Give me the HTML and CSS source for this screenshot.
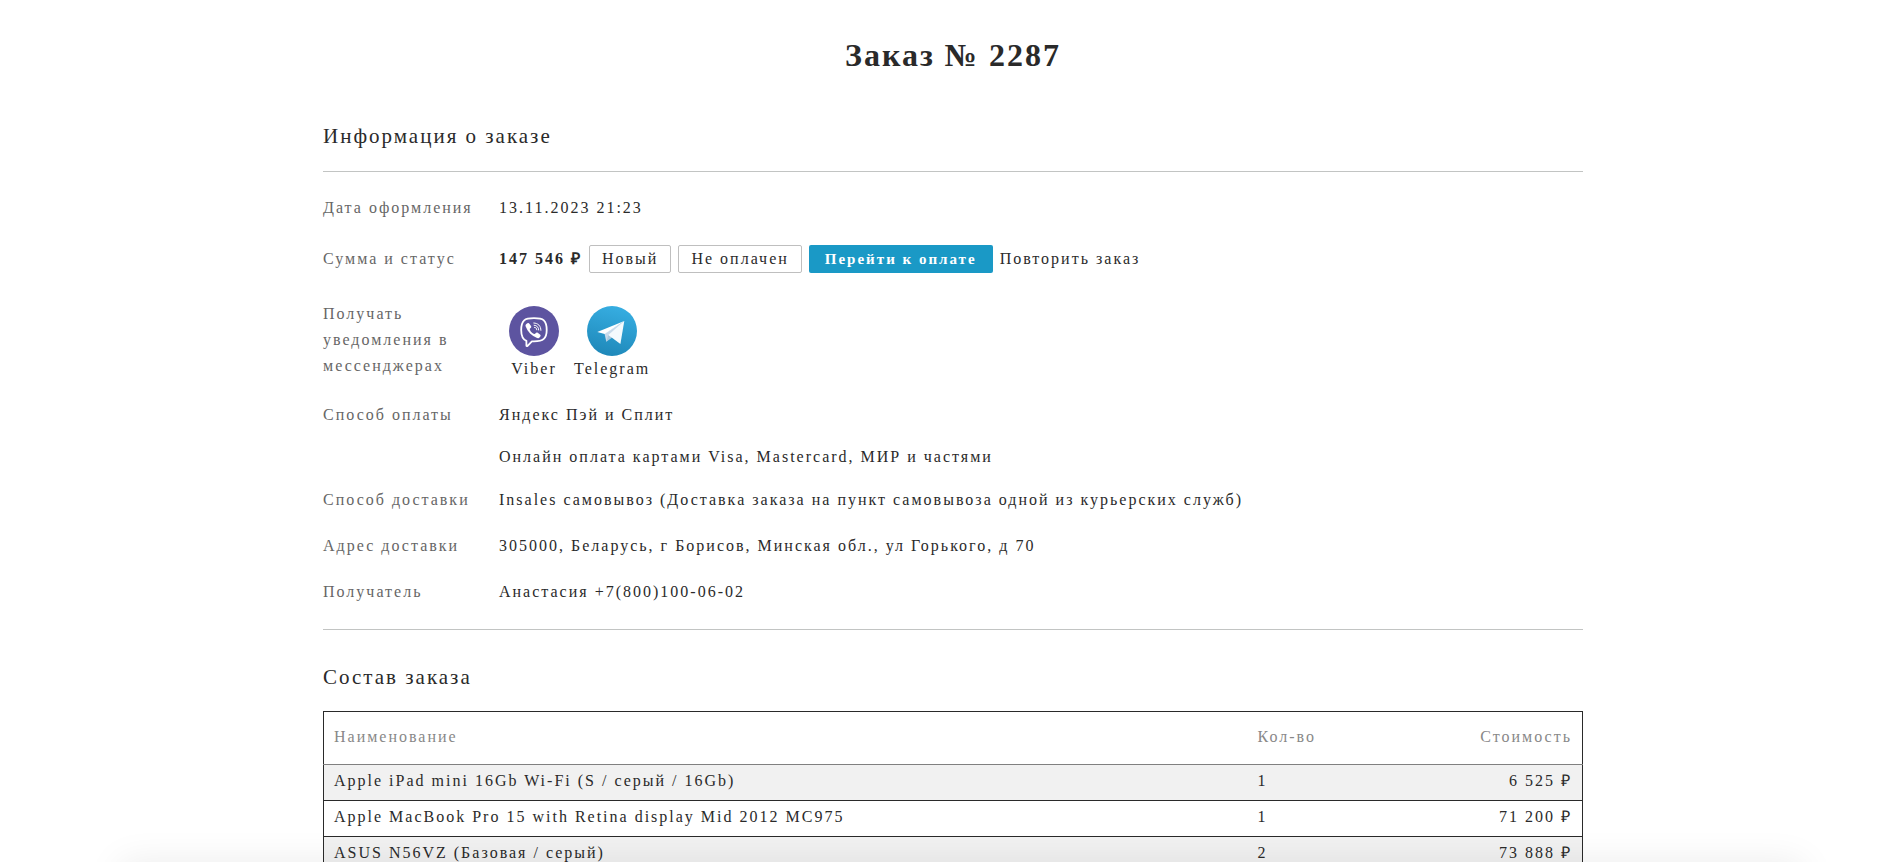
FILE: index.html
```html
<!DOCTYPE html>
<html lang="ru">
<head>
<meta charset="utf-8">
<title>Заказ № 2287</title>
<link rel="stylesheet" href="styles.css">
</head>
<body>
<main class="page">
  <h1 class="page-title">Заказ № 2287</h1>

  <section>
    <h2 class="section-title">Информация о заказе</h2>
    <dl class="info">
      <div class="info-row">
        <dt>Дата оформления</dt>
        <dd>13.11.2023 21:23</dd>
      </div>
      <div class="info-row info-row-status">
        <dt>Сумма и статус</dt>
        <dd class="status">
          <strong class="sum">147 546 ₽</strong>
          <span class="tag">Новый</span>
          <span class="tag">Не оплачен</span>
          <button class="pay" type="button">Перейти к оплате</button>
          <a class="repeat" href="#">Повторить заказ</a>
        </dd>
      </div>
      <div class="info-row info-row-messengers">
        <dt>Получать уведомления в мессенджерах</dt>
        <dd class="messengers">
          <a class="messenger" href="#">
            <svg class="messenger-icon" viewBox="0 0 50 50" aria-hidden="true">
              <circle cx="25" cy="25" r="25" fill="#5d54a0"/>
              <path d="M25 12.200c-4.600 0-7.800.4-9.800 2.200-2.300 2.100-3 5.100-3 9.600 0 5.200.9 9.200 5.200 10.800v4.600c0 .7.700.9 1.200.4l4.300-4.500h2.100c4.600 0 7.800-.6 9.800-2.400 2.300-2.100 2.900-5 2.900-8.900s-.6-7.500-2.900-9.600c-2-1.800-5.200-2.200-9.800-2.200z" fill="none" stroke="#fff" stroke-width="1.800" stroke-linejoin="round"/>
              <path d="M18.500 17.300c.7-.5 1.400-.3 1.900.4l1.600 2.300c.5.800.3 1.500-.4 2.100-.8.600-1 1-.7 1.700.8 2 2.100 3.400 4.200 4.200.6.200 1 0 1.500-.7.600-.8 1.300-1 2.100-.5l2.300 1.600c.8.500.8 1.200.3 2-.8 1.100-1.800 2.200-3.200 1.700-5.600-2.200-9.300-6.200-11.500-11.800-.5-1.300.7-2.200 1.900-3z" fill="#fff"/>
              <path d="M24.800 17c4.300.1 7.100 3 7.100 7.300M25.100 19.200c2.900.2 4.500 2 4.600 4.800M25.500 21.400c1.500.1 2.200.9 2.300 2.400" fill="none" stroke="#fff" stroke-width="1" stroke-linecap="round"/>
            </svg>
            Viber
          </a>
          <a class="messenger" href="#">
            <svg class="messenger-icon" viewBox="0 0 50 50" aria-hidden="true">
              <defs>
                <linearGradient id="sky" x1=".65" y1="0" x2=".4" y2="1">
                  <stop offset="0" stop-color="#37aee2"/>
                  <stop offset="1" stop-color="#1e88b9"/>
                </linearGradient>
              </defs>
              <circle cx="25" cy="25" r="25" fill="url(#sky)"/>
              <path d="M17.500 27.500l1.800 8.300 5-5.300L37.300 15z" fill="#c8daea"/>
              <path d="M19.300 35.800l2-6.800 4 2.600z" fill="#a9c9dd"/>
              <path d="M21.300 29L37.300 15 33.400 38z" fill="#f4fafd"/>
              <path d="M10.300 26L37.300 15 17.700 28z" fill="#fff"/>
            </svg>
            Telegram
          </a>
        </dd>
      </div>
      <div class="info-row info-row-payment">
        <dt>Способ оплаты</dt>
        <dd>
          <p class="paragraph">Яндекс Пэй и Сплит</p>
          <p class="paragraph">Онлайн оплата картами Visa, Mastercard, МИР и частями</p>
        </dd>
      </div>
      <div class="info-row">
        <dt>Способ доставки</dt>
        <dd>Insales самовывоз (Доставка заказа на пункт самовывоза одной из курьерских служб)</dd>
      </div>
      <div class="info-row">
        <dt>Адрес доставки</dt>
        <dd>305000, Беларусь, г Борисов, Минская обл., ул Горького, д 70</dd>
      </div>
      <div class="info-row">
        <dt>Получатель</dt>
        <dd>Анастасия +7(800)100-06-02</dd>
      </div>
    </dl>
  </section>

  <section>
    <h2 class="section-title section-title-items">Состав заказа</h2>
    <table class="items">
      <thead>
        <tr><th scope="col">Наименование</th><th class="qty" scope="col">Кол-во</th><th class="cost" scope="col">Стоимость</th></tr>
      </thead>
      <tbody>
        <tr><td>Apple iPad mini 16Gb Wi-Fi (S / серый / 16Gb)</td><td class="qty">1</td><td class="cost">6 525 ₽</td></tr>
        <tr><td>Apple MacBook Pro 15 with Retina display Mid 2012 MC975</td><td class="qty">1</td><td class="cost">71 200 ₽</td></tr>
        <tr><td>ASUS N56VZ (Базовая / серый)</td><td class="qty">2</td><td class="cost">73 888 ₽</td></tr>
      </tbody>
    </table>
  </section>
</main>
<div class="bottom-shade"></div>
</body>
</html>
```

FILE: styles.css
```css
* {
  box-sizing: border-box;
}

body {
  margin: 0;
  background: #fff;
  color: #2a2a2a;
  font-family: "Liberation Serif", "Times New Roman", serif;
  font-size: 16px;
  line-height: 26px;
  letter-spacing: 2px;
}

a {
  color: inherit;
  text-decoration: none;
}

.page {
  max-width: 1307px;
  margin: 0 auto;
  padding: 31px 22px 0 25px;
}

.page-title {
  margin: 0 0 41px;
  font-size: 32px;
  line-height: 48px;
  text-align: center;
}

.section-title {
  margin: 0 0 19px;
  font-size: 21px;
  font-weight: 400;
  line-height: 32px;
}

.section-title-items {
  margin: 31px 0 18px;
}

.info {
  margin: 0;
  padding-top: 23px;
  border-top: 1px solid #c2c4c3;
  border-bottom: 1px solid #c2c4c3;
}

.info-row {
  display: grid;
  grid-template-columns: 152px 1fr;
  column-gap: 24px;
  padding-bottom: 20px;
}

.info-row dt {
  color: #666;
}

.info-row dd {
  margin: 0;
}

.info-row:last-child {
  padding-bottom: 24px;
}

.info-row-status {
  align-items: center;
  padding: 4px 0 28px;
}

.info-row-payment {
  padding-bottom: 17px;
}

.status {
  display: flex;
  flex-wrap: wrap;
  align-items: center;
  gap: 7px;
}

.tag {
  padding: 0 12px;
  border: 1px solid #bfbfbf;
  border-radius: 2px;
}

.pay {
  padding: 1px 16px;
  border: 0;
  border-radius: 2px;
  background: #1a99c6;
  color: #fff;
  font: inherit;
  font-size: 15px;
  font-weight: 700;
  letter-spacing: inherit;
}

.messengers {
  display: flex;
  gap: 15px;
  padding: 5px 0 0 10px;
}

.messenger {
  display: flex;
  flex-direction: column;
  align-items: center;
}

.messenger-icon {
  width: 50px;
  height: 50px;
}

.paragraph {
  margin: 0 0 16px;
}

.paragraph:last-child {
  margin-bottom: 0;
}

.items {
  width: 100%;
  border-collapse: collapse;
  border: 1px solid #2a2a2a;
}

.items th {
  padding: 12px 10px 14px;
  border-bottom: 1px solid #808080;
  color: #888;
  font-weight: 400;
  text-align: left;
}

.items td {
  padding: 3px 10px 6px;
  border-bottom: 1px solid #2a2a2a;
}

.items tbody tr:nth-child(odd) {
  background: #f1f1f1;
}

.items .qty {
  width: 191px;
}

.items .cost {
  width: 144px;
  text-align: right;
}

.bottom-shade {
  position: fixed;
  top: 100%;
  left: 120px;
  right: 100px;
  height: 60px;
  box-shadow: 0 0 36px rgba(0, 0, 0, 0.08);
}
```
